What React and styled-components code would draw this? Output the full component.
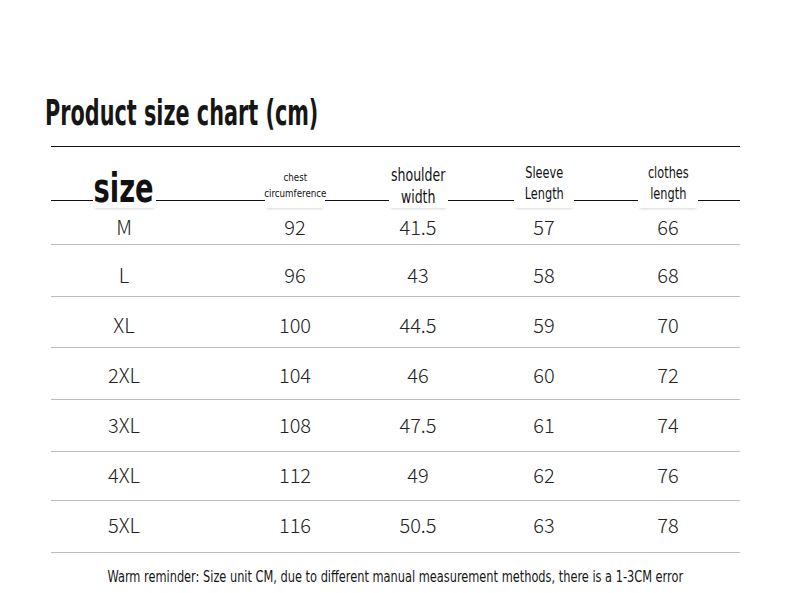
import React from "react";
import styled, { createGlobalStyle } from "styled-components";

const COND = `"DejaVu Sans Condensed", "DejaVu Sans", "Liberation Sans Narrow", sans-serif`;
const LIGHT = `"Noto Sans CJK SC", "Noto Sans", Lato, sans-serif`;

// column centres, measured from the left edge of the table
const CENTERS = [73, 244, 367, 493, 617];
const CELL = 110;
const TEMPLATE = CENTERS.map((c, i) => {
    const prevEnd = i === 0 ? 0 : CENTERS[i - 1] + CELL / 2;
    return `${c - CELL / 2 - prevEnd}px ${CELL}px`;
}).join(" ") + " 1fr";

const columnPlacement = CENTERS.map((_, i) => `
    & > :nth-child(${i + 1}) { grid-column: ${2 * i + 2}; }
`).join("");

// h = row height without its rule, shift = nudge of the text (px, + moves down)
const rows = [
    { h: 36, shift: 1, cells: ["M", "92", "41.5", "57", "66"] },
    { h: 51, shift: 8, cells: ["L", "96", "43", "58", "68"] },
    { h: 50, shift: 5, cells: ["XL", "100", "44.5", "59", "70"] },
    { h: 51, shift: 2, cells: ["2XL", "104", "46", "60", "72"] },
    { h: 51, shift: -1, cells: ["3XL", "108", "47.5", "61", "74"] },
    { h: 48, shift: -2, cells: ["4XL", "112", "49", "62", "76"] },
    { h: 51, shift: -4, cells: ["5XL", "116", "50.5", "63", "78"] },
];

export default function App() {
    return (
        <>
            <GlobalStyle />
            <Page>
                <Title><Squeeze $sx={0.66} $origin="left">Product size chart (cm)</Squeeze></Title>
                <Chart>
                    <HeaderRow>
                        <Label $w={63} $size={40} $weight={700} $lh={39}>
                            <Squeeze $sx={0.76}>size</Squeeze>
                        </Label>
                        <Label $w={60} $size={11} $pb={6}>
                            <Squeeze $sx={0.88}>chest<br />circumference</Squeeze>
                        </Label>
                        <Label $w={59} $size={17} $lh={22}>
                            <Squeeze $sx={0.82}>shoulder<br />width</Squeeze>
                        </Label>
                        <Label $w={60} $size={15} $pb={3} $lh={21}>
                            <Squeeze $sx={0.84}>Sleeve<br />Length</Squeeze>
                        </Label>
                        <Label $w={60} $size={15} $pb={3} $lh={21}>
                            <Squeeze $sx={0.84}>clothes<br />length</Squeeze>
                        </Label>
                    </HeaderRow>
                    {rows.map(row => (
                        <Row key={row.cells[0]} $h={row.h} $shift={row.shift}>
                            {row.cells.map((v, j) => <Cell key={j}>{v}</Cell>)}
                        </Row>
                    ))}
                </Chart>
                <Reminder>
                    <Squeeze $sx={0.79}>Warm reminder: Size unit CM, due to different manual measurement methods, there is a 1-3CM error</Squeeze>
                </Reminder>
            </Page>
        </>
    );
}

const GlobalStyle = createGlobalStyle`
    body {
        margin: 0;
        background: #fff;
    }
`;

const Page = styled.div`
    width: 790px;
    height: 593px;
    box-sizing: border-box;
    padding: 94px 50px 0 51px;
    overflow: hidden;
    background: #fff;
`;

const Squeeze = styled.span`
    display: inline-block;
    flex: none;
    transform: scaleX(${p => p.$sx});
    transform-origin: ${p => p.$origin || "center"} center;
    white-space: nowrap;
`;

const Title = styled.h1`
    margin: 0 0 0 -6px;
    font-family: ${COND};
    font-stretch: condensed;
    font-size: 35px;
    font-weight: 700;
    line-height: 38px;
    color: #161616;
`;

const Chart = styled.div`
    margin-top: 14px;
    border-top: 1px solid #111;
`;

const HeaderRow = styled.div`
    display: grid;
    grid-template-columns: ${TEMPLATE};
    align-items: end;
    height: 61px;
    background: linear-gradient(#111, #111) no-repeat 0 53px / 100% 1px;
    ${columnPlacement}
`;

const Label = styled.div`
    justify-self: center;
    display: flex;
    justify-content: center;
    width: ${p => p.$w}px;
    box-sizing: border-box;
    background: #fff;
    padding-bottom: ${p => p.$pb || 0}px;
    border-radius: 3px;
    box-shadow: 0 3px 3px -2px rgba(0, 0, 0, 0.16);
    font-family: ${COND};
    font-stretch: condensed;
    font-size: ${p => p.$size}px;
    font-weight: ${p => p.$weight || 400};
    line-height: ${p => (p.$lh ? `${p.$lh}px` : 1.45)};
    text-align: center;
    color: #111;
`;

const Row = styled.div`
    display: grid;
    grid-template-columns: ${TEMPLATE};
    align-items: center;
    height: ${p => p.$h + 1}px;
    padding-top: ${p => Math.max(p.$shift, 0)}px;
    padding-bottom: ${p => Math.max(-p.$shift, 0)}px;
    box-sizing: border-box;
    border-bottom: 1px solid #bdbdbd;
    ${columnPlacement}
`;

const Cell = styled.div`
    text-align: center;
    font-family: ${LIGHT};
    font-size: 20px;
    font-weight: 300;
    line-height: 22px;
    color: #222;
`;

const Reminder = styled.div`
    margin-top: 14px;
    display: flex;
    justify-content: center;
    font-family: ${COND};
    font-stretch: condensed;
    font-size: 16px;
    color: #161616;
`;
